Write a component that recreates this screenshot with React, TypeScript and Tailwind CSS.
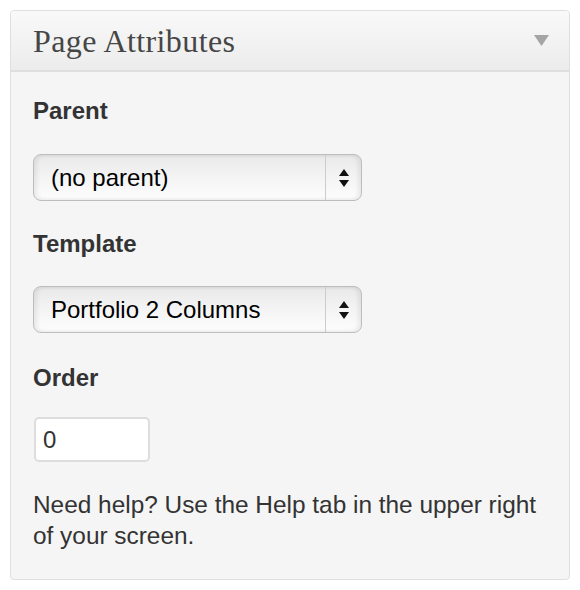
import React from "react";

function FakeSelect({ value }: { value: string }) {
  return (
    <div className="flex h-[47px] w-[329px] items-stretch rounded-[8px] border border-[#bdbdbd] bg-gradient-to-b from-[#e9e9e9] via-[#f4f4f4] to-[#fdfdfd] shadow-[inset_3px_0_4px_rgba(0,0,0,0.07),inset_-3px_0_4px_rgba(0,0,0,0.07)]">
      <div className="flex flex-1 items-center pl-[17px] text-[24px] text-black">{value}</div>
      <div className="w-px bg-[#cccccc]" />
      <div className="flex w-[35px] items-center justify-center">
        <svg width="10" height="20" viewBox="0 0 10 20">
          <polygon points="5,1 10,8 0,8" fill="#111" />
          <polygon points="0,12 10,12 5,19" fill="#111" />
        </svg>
      </div>
    </div>
  );
}

export default function App() {
  return (
    <div className="h-[590px] w-[580px] bg-white p-[10px] font-['Liberation_Sans',Arial,sans-serif]">
      <div className="h-[570px] w-[560px] overflow-hidden rounded-[4px] border border-[#dfdfdf] bg-[#f5f5f5]">
        {/* header */}
        <div className="flex h-[61px] items-center justify-between border-b-2 border-[#dfdfdf] bg-gradient-to-b from-[#f9f9f9] to-[#ececec] pl-[22px] pr-[20px]">
          <h3 className="font-['Liberation_Serif',Georgia,serif] text-[32px] tracking-[0.4px] text-[#464646]">Page Attributes</h3>
          <svg width="15" height="11" viewBox="0 0 15 11">
            <polygon points="0,0 15,0 7.5,11" fill="#a5a5a5" />
          </svg>
        </div>

        {/* body */}
        <div className="px-[22px] pt-[25px]">
          <p className="text-[24px] font-bold leading-[28px] text-[#333]">Parent</p>
          <div className="mt-[29px]">
            <FakeSelect value="(no parent)" />
          </div>

          <p className="mt-[29px] text-[24px] font-bold leading-[28px] text-[#333]">Template</p>
          <div className="mt-[28px]">
            <FakeSelect value="Portfolio 2 Columns" />
          </div>

          <p className="mt-[31px] text-[24px] font-bold leading-[28px] text-[#333]">Order</p>
          <div className="mt-[25px] ml-[1px] flex h-[45px] w-[116px] items-center rounded-[5px] border-2 border-[#dddddd] bg-white pl-[7px] text-[24px] text-[#333]">
            0
          </div>

          <p className="mt-[27px] w-[512px] text-[24.4px] leading-[31px] text-[#333]">
            Need help? Use the Help tab in the upper right of your screen.
          </p>
        </div>
      </div>
    </div>
  );
}
